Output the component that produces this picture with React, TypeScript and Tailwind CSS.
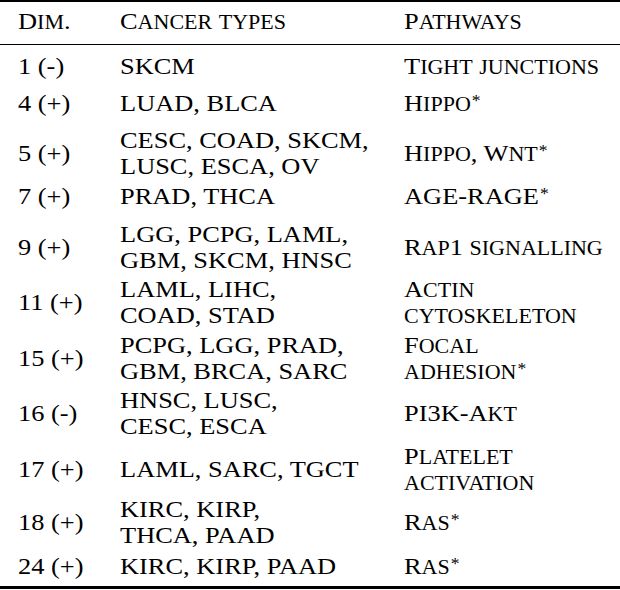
import React from "react";

const Star = () => <sup className="text-[16px] -top-[5px] ml-[1px]">*</sup>;

function SC({ t }: { t: string }) {
  const parts = t.match(/[a-z]+|[^a-z]+/g) || [];
  return (
    <>
      {parts.map((p, i) =>
        /[a-z]/.test(p[0]) ? (
          <span key={i} className="text-[20px] leading-[16px]">{p.toUpperCase()}</span>
        ) : (
          <span key={i}>{p}</span>
        )
      )}
    </>
  );
}

type Row = { dim: string; cancer: React.ReactNode; path: React.ReactNode; mt: string };

const rows: Row[] = [
  { dim: "1 (-)", cancer: "SKCM", path: <SC t="Tight junctions" />, mt: "mt-[8px]" },
  { dim: "4 (+)", cancer: "LUAD, BLCA", path: <><SC t="Hippo" /><Star /></>, mt: "mt-[11px]" },
  { dim: "5 (+)", cancer: <>CESC, COAD, SKCM,<br />LUSC, ESCA, OV</>, path: <><SC t="Hippo, Wnt" /><Star /></>, mt: "mt-[11px]" },
  { dim: "7 (+)", cancer: "PRAD, THCA", path: <>AGE-RAGE<Star /></>, mt: "mt-[4px]" },
  { dim: "9 (+)", cancer: <>LGG, PCPG, LAML,<br />GBM, SKCM, HNSC</>, path: <SC t="Rap1 signalling" />, mt: "mt-[12px]" },
  { dim: "11 (+)", cancer: <>LAML, LIHC,<br />COAD, STAD</>, path: <><SC t="Actin" /><br /><SC t="cytoskeleton" /></>, mt: "mt-[3px]" },
  { dim: "15 (+)", cancer: <>PCPG, LGG, PRAD,<br />GBM, BRCA, SARC</>, path: <><SC t="Focal" /><br /><SC t="adhesion" /><Star /></>, mt: "mt-[4px]" },
  { dim: "16 (-)", cancer: <>HNSC, LUSC,<br />CESC, ESCA</>, path: <SC t="PI3K-Akt" />, mt: "mt-[3px]" },
  { dim: "17 (+)", cancer: "LAML, SARC, TGCT", path: <><SC t="Platelet" /><br /><SC t="activation" /></>, mt: "mt-[4px]" },
  { dim: "18 (+)", cancer: <>KIRC, KIRP,<br />THCA, PAAD</>, path: <><SC t="Ras" /><Star /></>, mt: "mt-[1px]" },
  { dim: "24 (+)", cancer: "KIRC, KIRP, PAAD", path: <><SC t="Ras" /><Star /></>, mt: "mt-[5px]" },
];

const Cell = ({ children }: { children: React.ReactNode }) => (
  <div className="origin-left scale-x-[1.1] whitespace-nowrap">{children}</div>
);

export default function App() {
  return (
    <div className="w-[620px] h-[590px] overflow-hidden bg-white text-black font-serif [--font-serif:Liberation_Serif,serif] text-[24px] leading-[26px]">
      <div className="h-[2px] bg-black" />
      <div className="grid grid-cols-[102px_284px_1fr] pl-[18px] pt-[6px] pb-[10px]">
        <Cell><SC t="Dim." /></Cell>
        <Cell><SC t="Cancer types" /></Cell>
        <Cell><SC t="Pathways" /></Cell>
      </div>
      <div className="h-[1px] bg-black" />
      {rows.map((r) => (
        <div key={r.dim} className={`grid grid-cols-[102px_284px_1fr] pl-[18px] items-center ${r.mt}`}>
          <Cell>{r.dim}</Cell>
          <Cell>{r.cancer}</Cell>
          <Cell>{r.path}</Cell>
        </div>
      ))}
      <div className="mt-[7px] h-[3px] bg-black" />
    </div>
  );
}
